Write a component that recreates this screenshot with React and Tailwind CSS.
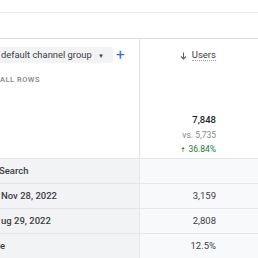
import React from "react";

const rows = [
    { label: "Search", value: "", shift: "-ml-[1px]" },
    { label: "Nov 28, 2022", value: "3,159", shift: "ml-[1px]" },
    { label: "ug 29, 2022", value: "2,808", shift: "ml-[1px]" },
    { label: "e", value: "12.5%", shift: "ml-0" },
];

export default function App() {
    return (
        <div className="w-[258px] h-[258px] overflow-hidden bg-white font-['Roboto',sans-serif] text-[#202124]">
            <div className="h-[12px]" />
            <div className="h-[26px] border-t border-[#e8eaed]" />

            <div className="flex border-t border-[#dadce0]">
                {/* colonne dimension */}
                <div className="w-[140px] shrink-0 border-r border-[#e0e0e0] h-[119px]">
                    <div className="flex items-center mt-[8px]">
                        <div className="-ml-[8px] h-[16px] w-[121px] bg-[#f1f3f4] rounded-[4px] flex items-center pl-[9px] text-[9.4px] text-[#3c4043]">
                            <span className="whitespace-nowrap">default channel group</span>
                            <span className="ml-auto mr-[9px] text-[6px] text-[#3c4043]">▼</span>
                        </div>
                        <span className="ml-[3px] text-[#1a73e8] text-[15px] leading-none">+</span>
                    </div>
                    <div className="mt-[13px] text-[7.5px] tracking-[0.5px] font-medium text-[#80868b] leading-none">
                        ALL ROWS
                    </div>
                </div>

                {/* colonne métrique */}
                <div className="flex-1 h-[119px] pr-[42px] flex flex-col items-end">
                    <div className="flex items-center mt-[10px] text-[#5f6368]">
                        <svg width="7" height="8" viewBox="0 0 7 8" className="mr-[5px] mt-[1px]">
                            <path d="M3.5 0.5 V7 M1 4.5 L3.5 7 L6 4.5" stroke="#5f6368" strokeWidth="1.1" fill="none" />
                        </svg>
                        <span className="text-[9.5px] leading-[11px] text-[#3c4043] border-b border-dotted border-[#9aa0a6]">
                            Users
                        </span>
                    </div>
                    <div className="mt-[52px] text-[9.5px] font-medium leading-[14px]">7,848</div>
                    <div className="mt-[1px] text-[8.5px] text-[#80868b] leading-[15px]">vs. 5,735</div>
                    <div className="text-[8.5px] text-[#188038] leading-[13px]">
                        <span className="text-[7px] mr-[3px]">🠅</span>36.84%
                    </div>
                </div>
            </div>

            {rows.map((r, i) => (
                <div key={i} className="flex border-t border-[#e4e6e8] h-[25px]">
                    <div className="w-[140px] shrink-0 bg-[#f1f3f4] border-r border-[#e4e6e8] flex items-center overflow-hidden">
                        <span className={`whitespace-nowrap text-[9.5px] font-medium text-[#3c4043] ${r.shift}`}>
                            {r.label}
                        </span>
                    </div>
                    <div className="flex-1 bg-[#f8f9fa] flex items-center justify-end pr-[42px] text-[9.5px] text-[#3c4043]">
                        {r.value}
                    </div>
                </div>
            ))}
        </div>
    );
}
